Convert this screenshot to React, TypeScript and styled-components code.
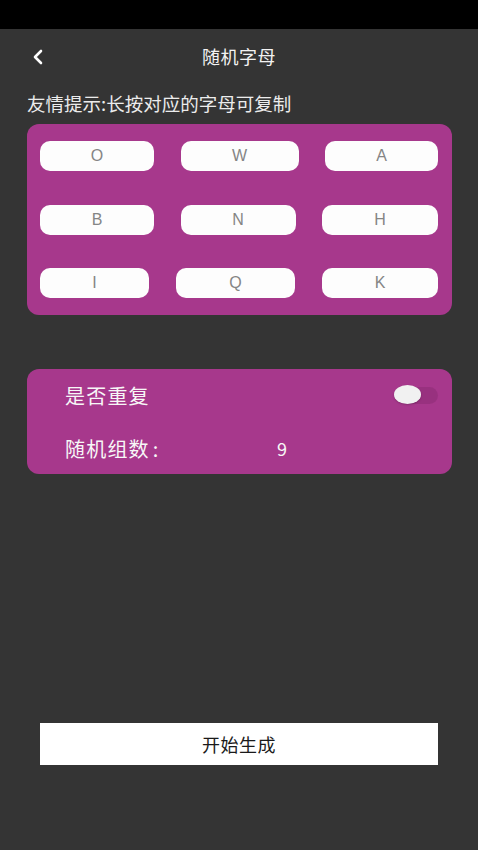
import React from "react";
import styled, { createGlobalStyle } from "styled-components";

const GlobalStyle = createGlobalStyle`
  html, body {
    margin: 0;
    padding: 0;
    background: #343434;
  }
  * {
    box-sizing: border-box;
  }
`;

const cjk = `"Noto Sans CJK SC", "Noto Sans", sans-serif`;

const Page = styled.div`
  width: 478px;
  height: 850px;
  background: #343434;
  display: flex;
  flex-direction: column;
  font-family: ${cjk};
  overflow: hidden;
`;

const StatusBar = styled.div`
  height: 29px;
  background: #000;
  flex-shrink: 0;
`;

const Header = styled.div`
  position: relative;
  height: 54px;
  display: flex;
  align-items: center;
  justify-content: center;
`;

const BackButton = styled.button`
  position: absolute;
  left: 28px;
  top: 18px;
  width: 20px;
  height: 20px;
  padding: 0;
  border: none;
  background: transparent;
  display: flex;
  align-items: center;
  justify-content: center;
`;

const Title = styled.h1`
  margin: 0;
  font-size: 18px;
  font-weight: 400;
  color: #f2f2f2;
  letter-spacing: 0.5px;
`;

const Hint = styled.p`
  margin: 8px 0 9px 27px;
  font-size: 18.5px;
  line-height: 24px;
  color: #ececec;
`;

const Card = styled.div`
  margin: 0 26px 0 27px;
  background: #a7388c;
  border-radius: 12px;
`;

const LetterCard = styled(Card)`
  padding: 17px 14px 17px 13px;
  display: flex;
  flex-direction: column;
  gap: 33.5px;
`;

const LetterRow = styled.div`
  display: flex;
  justify-content: space-between;
`;

const LetterButton = styled.div<{ $w: number }>`
  width: ${(p) => p.$w}px;
  height: 30px;
  border-radius: 10px;
  background: #fdfdfd;
  display: flex;
  align-items: center;
  justify-content: center;
  font-family: "Liberation Sans", Arial, sans-serif;
  font-size: 16px;
  color: #858585;
`;

const SettingsCard = styled(Card)`
  margin-top: 54px;
  padding: 8px 14px 8px 38px;
  display: flex;
  flex-direction: column;
  gap: 17px;
`;

const SettingRow = styled.div`
  height: 36px;
  display: flex;
  align-items: center;
  justify-content: space-between;
`;

const Label = styled.span<{ $minWidth?: number }>`
  min-width: ${(p) => (p.$minWidth ? `${p.$minWidth}px` : "auto")};
  font-size: 20px;
  letter-spacing: 1.2px;
  color: #f7f7f7;
`;

const Colon = styled.span`
  margin-left: 3px;
`;

const Value = styled.span`
  font-size: 18px;
  color: #f7f7f7;
  flex: 1;
`;

const Toggle = styled.div`
  position: relative;
  width: 44px;
  height: 20px;
`;

const Track = styled.div`
  position: absolute;
  left: 6px;
  top: 2px;
  width: 38px;
  height: 17px;
  border-radius: 9px;
  background: rgba(90, 20, 70, 0.18);
`;

const Thumb = styled.div`
  position: absolute;
  left: 0;
  top: 0;
  width: 27px;
  height: 19px;
  border-radius: 50%;
  background: #f1f1f1;
  box-shadow: 0 1px 2px rgba(0, 0, 0, 0.2);
`;

const Spacer = styled.div`
  flex: 1;
  max-height: 249px;
  min-height: 249px;
`;

const StartButton = styled.button`
  margin: 0 40px;
  height: 42px;
  border: none;
  border-radius: 0;
  background: #ffffff;
  font-family: ${cjk};
  font-size: 18px;
  color: #1a1a1a;
  letter-spacing: 0.5px;
`;

const rows: { letter: string; w: number }[][] = [
  [
    { letter: "O", w: 114 },
    { letter: "W", w: 118 },
    { letter: "A", w: 113 },
  ],
  [
    { letter: "B", w: 114 },
    { letter: "N", w: 115 },
    { letter: "H", w: 116 },
  ],
  [
    { letter: "I", w: 109 },
    { letter: "Q", w: 119 },
    { letter: "K", w: 116 },
  ],
];

const App: React.FC = () => {
  return (
    <>
      <GlobalStyle />
      <Page>
        <StatusBar />
        <Header>
          <BackButton aria-label="返回">
            <svg width="12" height="16" viewBox="0 0 12 16">
              <path
                d="M9 2 L3 8 L9 14"
                fill="none"
                stroke="#ffffff"
                strokeWidth="2.6"
                strokeLinecap="round"
                strokeLinejoin="round"
              />
            </svg>
          </BackButton>
          <Title>随机字母</Title>
        </Header>
        <Hint>友情提示:长按对应的字母可复制</Hint>
        <LetterCard>
          {rows.map((row, i) => (
            <LetterRow key={i}>
              {row.map((b) => (
                <LetterButton key={b.letter} $w={b.w}>
                  {b.letter}
                </LetterButton>
              ))}
            </LetterRow>
          ))}
        </LetterCard>
        <SettingsCard>
          <SettingRow>
            <Label>是否重复</Label>
            <Toggle>
              <Track />
              <Thumb />
            </Toggle>
          </SettingRow>
          <SettingRow>
            <Label $minWidth={212}>
              随机组数<Colon>:</Colon>
            </Label>
            <Value>9</Value>
          </SettingRow>
        </SettingsCard>
        <Spacer />
        <StartButton>开始生成</StartButton>
      </Page>
    </>
  );
};

export default App;
